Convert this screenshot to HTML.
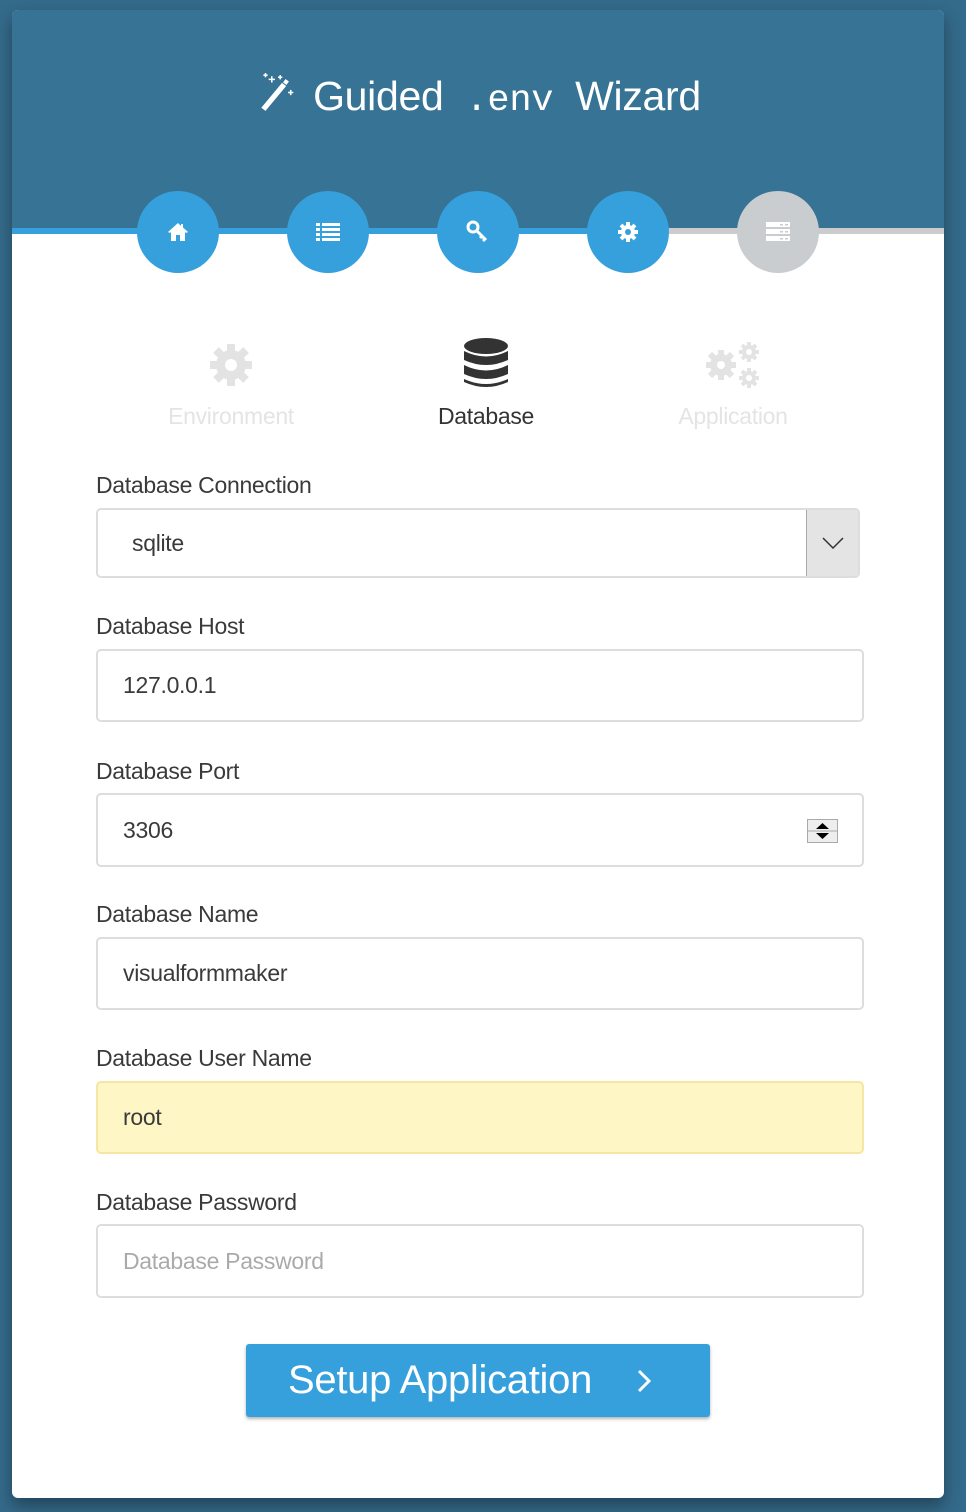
<!DOCTYPE html>
<html><head><meta charset="utf-8"><style>
*{box-sizing:border-box;margin:0;padding:0}
body{width:966px;height:1512px;background:#346a8a;position:relative;overflow:hidden;font-family:"Liberation Sans",sans-serif}
.card{position:absolute;left:12px;top:10px;width:932px;height:1488px;background:#fff;border-radius:6px;box-shadow:0 8px 16px rgba(0,0,0,.35);overflow:hidden}
.hdr{position:absolute;left:0;top:0;width:932px;height:222px;background:#377395}
.title{position:absolute;left:0;top:62px;width:932px;text-align:center;color:#fff;font-size:41px;letter-spacing:-0.3px}
.title .mono{font-family:"Liberation Mono",monospace;font-size:37px;margin:0 22px}
.bar{position:absolute;top:218px;height:6px}
.c{position:absolute;top:181px;width:82px;height:82px;border-radius:50%;background:#36a0dc;display:flex;align-items:center;justify-content:center}
.step{position:absolute;top:393px;font-size:23px;color:#e4e4e4;text-align:center;width:240px;letter-spacing:-0.3px}
.lbl{position:absolute;left:84px;font-size:23px;color:#3a3a3a;letter-spacing:-0.3px}
.in{position:absolute;left:84px;width:768px;border:2px solid #ddd;border-radius:5px;font-size:23px;color:#3a3a3a;padding-left:25px;display:flex;align-items:center;letter-spacing:-0.3px}
.btn{position:absolute;left:234px;top:1334px;width:464px;height:73px;background:#36a0dc;border-radius:3px;color:#fff;font-size:40px;display:flex;align-items:center;padding-left:42px;box-shadow:0 2px 3px rgba(0,0,0,.3);letter-spacing:-0.3px}
</style></head><body>
<div class="card">
<div class="hdr"></div>
<div class="title"><svg width="42" height="42" viewBox="0 0 40 40" style="vertical-align:-4px;margin-right:16px"><path d="M6 34 L26 10 L30 13 L10 37 Z" fill="#fff"/><path d="M26 10 L30 13 L33 9 L29 6Z" fill="#fff" stroke="#377395" stroke-width="1"/><path d="M16 4v6M13 7h6M10 1v4M8 3h4M24 3v4M22 5h4M34 17v5M31.5 19.5h5" stroke="#fff" stroke-width="1.5"/></svg>Guided<span class="mono">.env</span>Wizard</div>
<div class="bar" style="left:0;width:656px;background:#36a0dc"></div>
<div class="bar" style="left:656px;width:276px;background:#ccc"></div>
<div class="c" style="left:125px"><svg width="24" height="22" viewBox="0 0 24 22"><path d="M12 2 L2 11 L4 12 L5 11 V20 H10 V14 H14 V20 H19 V11 L20 12 L22 11 L17 6.5 V3 H15 V5 Z" fill="#fff"/></svg></div>
<div class="c" style="left:275px"><svg width="26" height="22" viewBox="0 0 26 22"><g fill="#fff"><rect x="1" y="2" width="4" height="3"/><rect x="7" y="2" width="18" height="3"/><rect x="1" y="7" width="4" height="3"/><rect x="7" y="7" width="18" height="3"/><rect x="1" y="12" width="4" height="3"/><rect x="7" y="12" width="18" height="3"/><rect x="1" y="17" width="4" height="3"/><rect x="7" y="17" width="18" height="3"/></g></svg></div>
<div class="c" style="left:425px"><svg width="26" height="26" viewBox="0 0 26 26"><circle cx="8" cy="8" r="5" fill="none" stroke="#fff" stroke-width="3"/><path d="M11 11 L21 21 M17 17 L15 19 M20 20 L18 22" stroke="#fff" stroke-width="3"/></svg></div>
<div class="c" style="left:575px"><svg width="24" height="24" viewBox="0 0 24 24"><circle cx="12" cy="12" r="7" fill="#fff"/><g stroke="#fff" stroke-width="4"><path d="M12 2v20M2 12h20M5 5l14 14M19 5L5 19"/></g><circle cx="12" cy="12" r="3" fill="#36a0dc"/></svg></div>
<div class="c" style="left:725px;background:#c9cdd0"><svg width="26" height="22" viewBox="0 0 26 22"><g fill="#fff"><rect x="1" y="1" width="24" height="5"/><rect x="1" y="8" width="24" height="5"/><rect x="1" y="15" width="24" height="5"/></g><g fill="#c9cdd0"><rect x="15" y="3" width="3" height="1.5"/><rect x="20" y="3" width="3" height="1.5"/><rect x="15" y="10" width="3" height="1.5"/><rect x="20" y="10" width="3" height="1.5"/><rect x="15" y="17" width="3" height="1.5"/><rect x="20" y="17" width="3" height="1.5"/></g></svg></div>

<svg style="position:absolute;left:196px;top:332px" width="46" height="46" viewBox="0 0 46 46"><g stroke="#e3e3e3" stroke-width="8"><path d="M23 2v42M2 23h42M8 8l30 30M38 8L8 38"/></g><circle cx="23" cy="23" r="15" fill="#e3e3e3"/><circle cx="23" cy="23" r="6" fill="#fff"/></svg>
<svg style="position:absolute;left:451px;top:328px" width="46" height="52" viewBox="0 0 46 52"><g fill="#333"><ellipse cx="23" cy="8" rx="22" ry="8"/><path d="M1 13 Q23 24 45 13 V22 Q23 32 1 22Z"/><path d="M1 27 Q23 38 45 27 V36 Q23 46 1 36Z"/><path d="M1 41 Q23 51 45 41 V44 Q23 54 1 44Z"/></g></svg>
<svg style="position:absolute;left:692px;top:330px" width="58" height="50" viewBox="0 0 58 50"><g fill="#e3e3e3"><g stroke="#e3e3e3" stroke-width="6"><path d="M17 10v30M2 25h30M6 14l22 22M28 14L6 36"/><path d="M45 2v20M35 12h20M38 5l14 14M52 5L38 19" stroke-width="4"/><path d="M45 28v20M35 38h20M38 31l14 14M52 31L38 45" stroke-width="4"/></g><circle cx="17" cy="25" r="11"/><circle cx="45" cy="12" r="7"/><circle cx="45" cy="38" r="7"/></g><circle cx="17" cy="25" r="4" fill="#fff"/><circle cx="45" cy="12" r="3" fill="#fff"/><circle cx="45" cy="38" r="3" fill="#fff"/></svg>
<div class="step" style="left:99px">Environment</div>
<div class="step" style="left:354px;color:#333">Database</div>
<div class="step" style="left:601px">Application</div>

<div class="lbl" style="top:462px">Database Connection</div>
<div class="in" style="top:498px;height:70px;width:764px;padding-left:34px">sqlite<div style="position:absolute;right:0;top:0;width:52px;height:66px;background:#e4e4e4;border-left:1px solid #aaa;display:flex;align-items:center;justify-content:center"><svg width="22" height="12" viewBox="0 0 22 12"><path d="M1 1 L11 11 L21 1" fill="none" stroke="#333" stroke-width="1.5"/></svg></div></div>
<div class="lbl" style="top:603px">Database Host</div>
<div class="in" style="top:639px;height:73px">127.0.0.1</div>
<div class="lbl" style="top:748px">Database Port</div>
<div class="in" style="top:783px;height:74px">3306<div style="position:absolute;left:709px;top:24px;width:31px;height:24px;border:1px solid #aaa;background:#eee"><svg width="29" height="22" viewBox="0 0 29 22"><path d="M14.5 3 L21 9 H8Z M8 13 H21 L14.5 19Z" fill="#000"/><path d="M0 11 H29" stroke="#aaa"/></svg></div></div>
<div class="lbl" style="top:891px">Database Name</div>
<div class="in" style="top:927px;height:73px">visualformmaker</div>
<div class="lbl" style="top:1035px">Database User Name</div>
<div class="in" style="top:1071px;height:73px;background:#fff6c6;border-color:#f6e6a6">root</div>
<div class="lbl" style="top:1179px">Database Password</div>
<div class="in" style="top:1214px;height:74px;color:#aaa">Database Password</div>
<div class="btn">Setup Application<svg style="margin-left:44px" width="16" height="26" viewBox="0 0 16 26"><path d="M3 3 L13 13 L3 23" fill="none" stroke="#fff" stroke-width="3"/></svg></div>
</div>
</body></html>
